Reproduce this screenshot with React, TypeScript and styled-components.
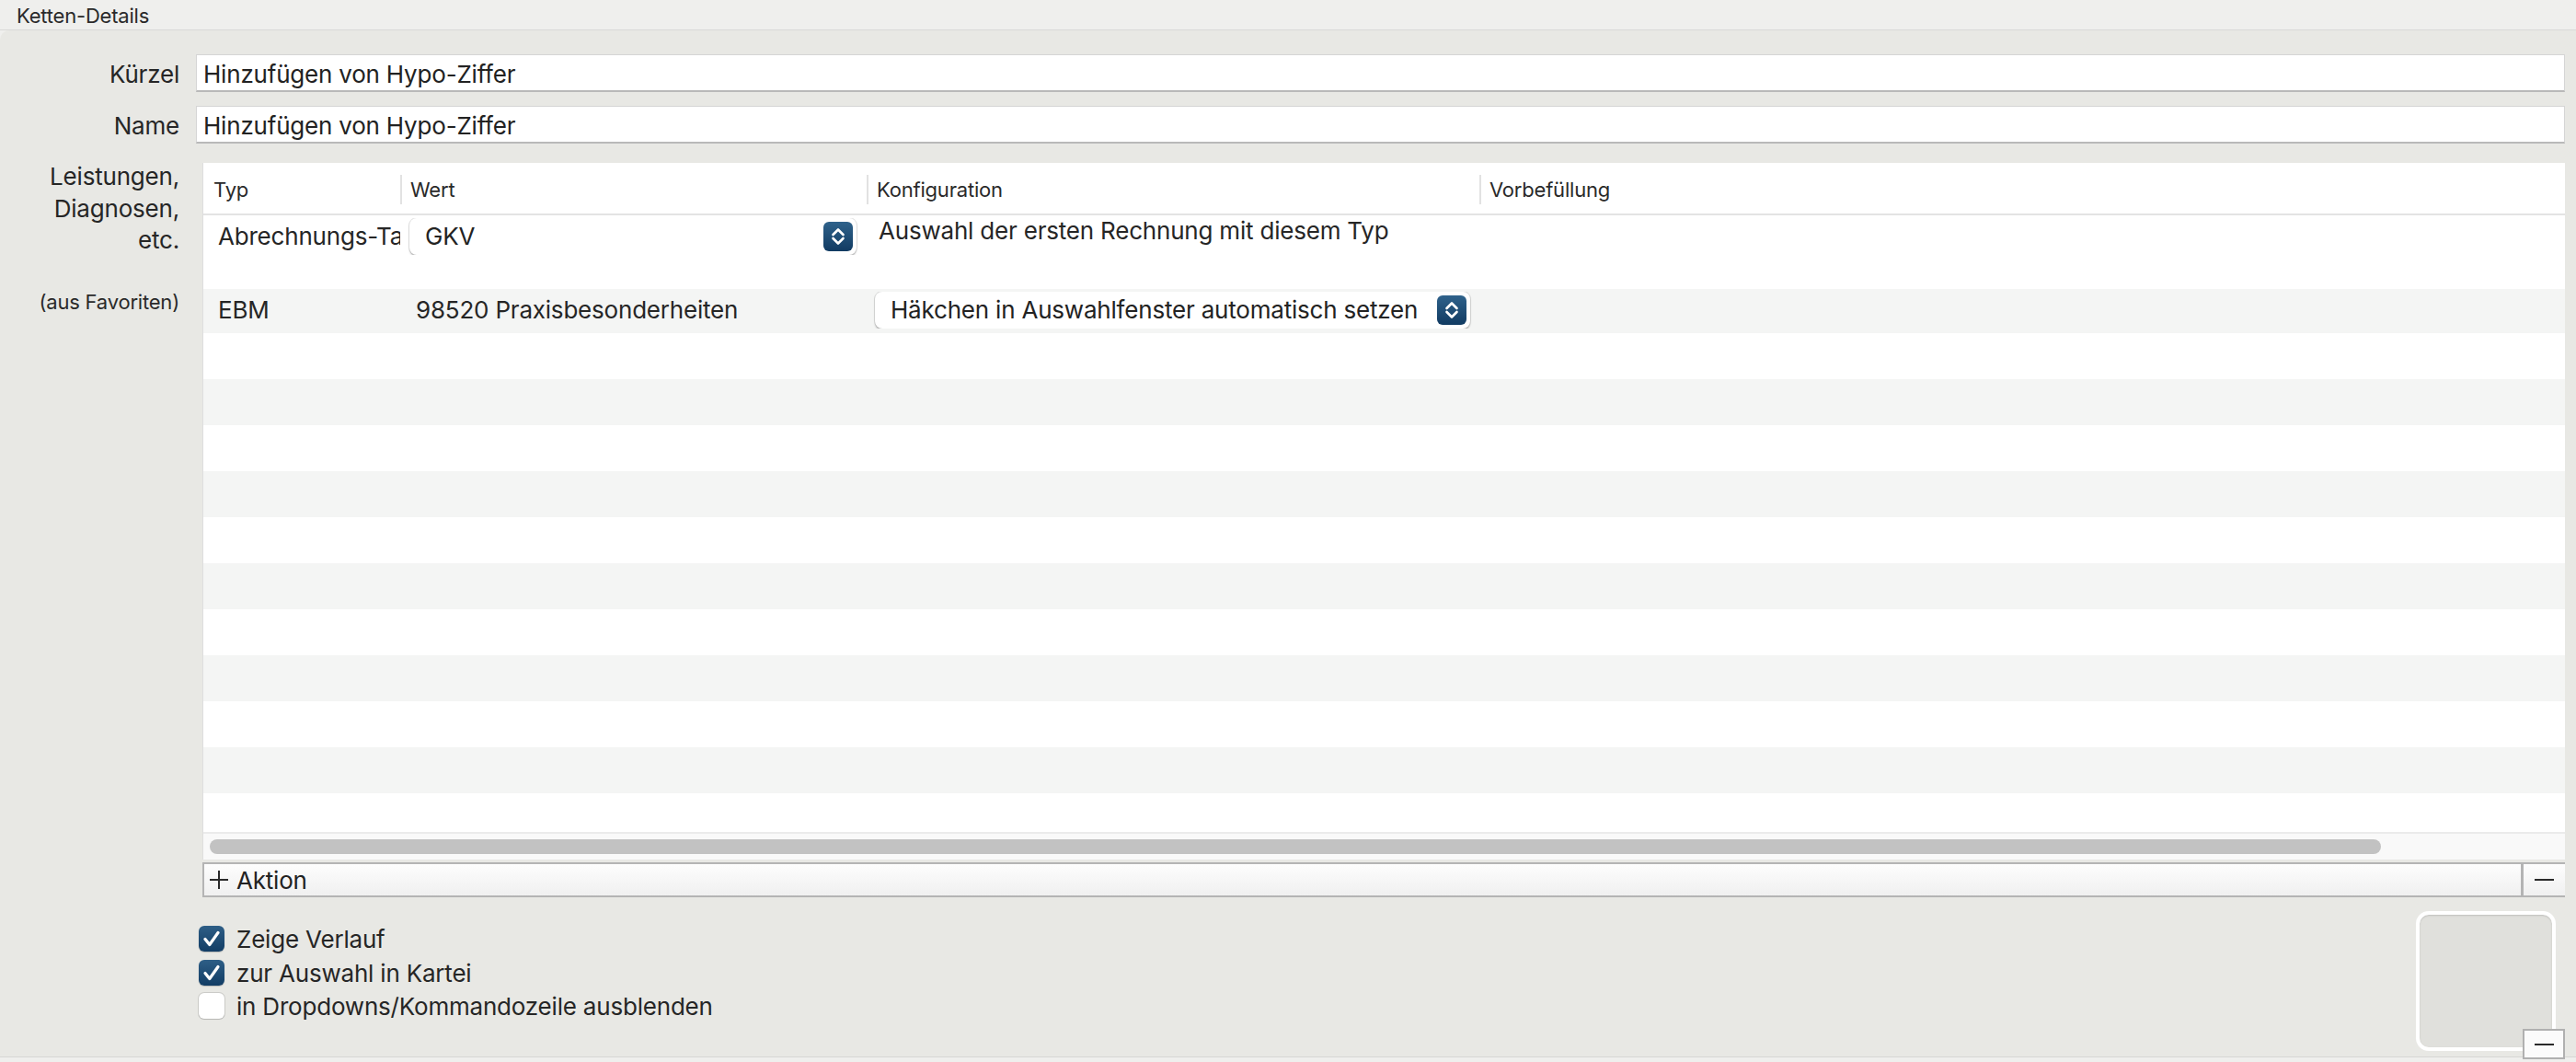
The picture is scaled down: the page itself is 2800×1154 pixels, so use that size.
import React from "react";
import styled, { createGlobalStyle } from "styled-components";

const GlobalStyle = createGlobalStyle`
  html, body {
    margin: 0;
    padding: 0;
    background: #efefed;
  }
  body {
    font-family: Inter, "Noto Sans", "Liberation Sans", sans-serif;
    color: #262626;
    letter-spacing: -0.2px;
    -webkit-font-smoothing: antialiased;
  }
`;

const COLS = "214px 507px 666px 1fr";

const Window = styled.div`
  width: 2800px;
  height: 1154px;
  display: flex;
  flex-direction: column;
  background: #efefed;
  overflow: hidden;
`;

const TitleBar = styled.div`
  height: 33px;
  box-sizing: border-box;
  padding: 3px 0 0 18px;
  font-size: 22px;
  line-height: 29px;
  color: #2a2a2a;
  border-bottom: 1px solid #d9d9d7;
`;

const Panel = styled.div`
  height: 1116px;
  box-sizing: border-box;
  background: #e8e8e4;
  border-top-left-radius: 10px;
  border-bottom: 1px solid #d6d6d4;
  padding: 26px 12px 0 0;
  display: flex;
  flex-direction: column;
`;

const FieldRow = styled.div<{ $top?: number }>`
  display: grid;
  grid-template-columns: 195px 1fr;
  column-gap: 18px;
  margin-top: ${(p) => p.$top ?? 0}px;
`;

const Label = styled.div`
  height: 41px;
  box-sizing: border-box;
  text-align: right;
  font-size: 26px;
  line-height: 38px;
  padding-top: 3px;
  color: #262626;
`;

const TextField = styled.div`
  height: 41px;
  box-sizing: border-box;
  background: #fff;
  border: 1px solid #d5d5d5;
  border-bottom: 2px solid #b9b9b9;
  padding: 3px 0 0 7px;
  font-size: 26px;
  line-height: 35px;
  color: #222;
`;

const LabelStack = styled.div`
  display: flex;
  flex-direction: column;
  align-items: flex-end;
  margin-top: -2px;
`;

const StackLine = styled.div`
  font-size: 26px;
  line-height: 34.5px;
  color: #262626;
`;

const Hint = styled.div`
  font-size: 22px;
  line-height: 28px;
  margin-top: 35px;
  color: #2a2a2a;
`;

const TableArea = styled.div`
  margin-left: 7px;
  display: flex;
  flex-direction: column;
`;

const TableBox = styled.div`
  background: #fff;
  border-left: 1px solid #dedede;
`;

const HeaderRow = styled.div`
  display: grid;
  grid-template-columns: ${COLS};
  height: 57px;
  box-sizing: border-box;
  border-bottom: 2px solid #e3e3e3;
`;

const HeaderCell = styled.div<{ $sep?: boolean }>`
  position: relative;
  padding: 4px 0 0 11px;
  font-size: 22px;
  line-height: 51px;
  color: #2a2a2a;
  white-space: nowrap;
  overflow: hidden;
  &::before {
    content: "";
    display: ${(p) => (p.$sep ? "block" : "none")};
    position: absolute;
    left: 0;
    top: 13px;
    height: 32px;
    width: 2px;
    background: #e2e2e2;
  }
`;

const Body = styled.div`
  height: 670px;
  overflow: hidden;
`;

const Row = styled.div<{ $h: number; $alt?: boolean; $top?: boolean }>`
  display: grid;
  grid-template-columns: ${COLS};
  height: ${(p) => p.$h}px;
  box-sizing: border-box;
  background: ${(p) => (p.$alt ? "#f4f5f4" : "#fff")};
  align-items: ${(p) => (p.$top ? "start" : "center")};
  padding: ${(p) => (p.$top ? "3px 0 0" : "0 0 3px")};
`;

const Cell = styled.div<{ $pad: number; $lift?: number }>`
  padding-left: ${(p) => p.$pad}px;
  font-size: 26px;
  line-height: 40px;
  height: 40px;
  margin-top: ${(p) => -(p.$lift ?? 0)}px;
  white-space: nowrap;
  overflow: hidden;
  color: #262626;
`;

const PopupBox = styled.div<{ $w: number }>`
  width: ${(p) => p.$w}px;
  height: 40px;
  box-sizing: border-box;
  background: #fff;
  border-radius: 8px;
  box-shadow: 0 0 0 1px rgba(0, 0, 0, 0.09), 0 1.5px 2px rgba(0, 0, 0, 0.22);
  display: flex;
  align-items: center;
  justify-content: space-between;
  padding: 0 4px 0 17px;
  font-size: 26px;
  color: #232323;
`;

const Stepper = styled.div`
  width: 32px;
  height: 32px;
  border-radius: 6px;
  background: linear-gradient(#2f628b, #113b62);
  display: flex;
  align-items: center;
  justify-content: center;
`;

const ScrollTrack = styled.div`
  height: 30px;
  box-sizing: border-box;
  background: #f9f9f9;
  border-top: 2px solid #ebebeb;
  padding: 6px 200px 0 7px;
`;

const Thumb = styled.div`
  height: 16px;
  border-radius: 8px;
  background: #c2c2c2;
`;

const ActionBar = styled.div`
  margin-top: 3px;
  height: 38px;
  box-sizing: border-box;
  display: flex;
  border-top: 2px solid #b4b4b4;
  border-bottom: 2px solid #b4b4b4;
  border-left: 2px solid #b4b4b4;
  background: linear-gradient(#fdfdfd, #f0f0f0);
`;

const AddButton = styled.div`
  flex: 1;
  display: flex;
  align-items: center;
  gap: 8px;
  padding-left: 5px;
  font-size: 26px;
  color: #222;
`;

const MinusCell = styled.div`
  width: 45px;
  border-left: 3px solid #b4b4b4;
  display: flex;
  align-items: center;
  justify-content: center;
`;

const MinusLine = styled.div`
  width: 21px;
  height: 2px;
  background: #2a2a2a;
`;

const Footer = styled.div`
  display: flex;
  justify-content: space-between;
  align-items: flex-start;
  padding-left: 216px;
`;

const Checks = styled.div`
  padding-top: 31px;
  display: flex;
  flex-direction: column;
`;

const CheckRow = styled.div`
  height: 36.5px;
  display: flex;
  align-items: flex-start;
  gap: 13px;
  font-size: 26px;
  line-height: 30px;
  color: #262626;
`;

const Box = styled.div<{ $on: boolean }>`
  width: 28px;
  height: 28px;
  box-sizing: border-box;
  border-radius: 6px;
  background: ${(p) => (p.$on ? "linear-gradient(#2e5e86, #123d65)" : "#fff")};
  box-shadow: ${(p) =>
    p.$on ? "0 1px 1px rgba(0,0,0,0.2)" : "0 0 0 1px rgba(0,0,0,0.12), 0 1px 1px rgba(0,0,0,0.1)"};
  display: flex;
  align-items: center;
  justify-content: center;
`;

const Well = styled.div`
  position: relative;
  margin: 15px 10px 0 0;
  width: 152px;
  height: 152px;
  box-sizing: border-box;
  border-radius: 14px;
  border: 4px solid #fff;
  background: #e0e0dc;
  box-shadow: inset 0 1px 2px rgba(0, 0, 0, 0.15);
`;

const WellMinus = styled.div`
  position: absolute;
  right: -14px;
  bottom: -13px;
  width: 46px;
  height: 33px;
  box-sizing: border-box;
  background: #fbfbfb;
  border: 2px solid #b0b0b0;
  display: flex;
  align-items: center;
  justify-content: center;
`;

function Chevrons() {
  return (
    <svg width="32" height="32" viewBox="0 0 32 32" fill="none">
      <path d="M10.5 14 L16 8.5 L21.5 14" stroke="#fff" strokeWidth="2.6" strokeLinecap="round" strokeLinejoin="round" />
      <path d="M10.5 18 L16 23.5 L21.5 18" stroke="#fff" strokeWidth="2.6" strokeLinecap="round" strokeLinejoin="round" />
    </svg>
  );
}

function Popup({ width, label }: { width: number; label: string }) {
  return (
    <PopupBox $w={width}>
      <span>{label}</span>
      <Stepper>
        <Chevrons />
      </Stepper>
    </PopupBox>
  );
}

function Check({ on, label }: { on: boolean; label: string }) {
  return (
    <CheckRow>
      <Box $on={on}>
        {on && (
          <svg width="28" height="28" viewBox="0 0 28 28" fill="none">
            <path d="M7 14.5 L11.8 20.5 L21 7.5" stroke="#fff" strokeWidth="3.2" strokeLinecap="round" strokeLinejoin="round" />
          </svg>
        )}
      </Box>
      <span>{label}</span>
    </CheckRow>
  );
}

export default function App() {
  const fillers = Array.from({ length: 11 }, (_, i) => i % 2 === 1);
  return (
    <>
      <GlobalStyle />
      <Window>
        <TitleBar>Ketten-Details</TitleBar>
        <Panel>
          <FieldRow>
            <Label>Kürzel</Label>
            <TextField>Hinzufügen von Hypo-Ziffer</TextField>
          </FieldRow>
          <FieldRow $top={15}>
            <Label>Name</Label>
            <TextField>Hinzufügen von Hypo-Ziffer</TextField>
          </FieldRow>
          <FieldRow $top={21}>
            <LabelStack>
              <StackLine>Leistungen,</StackLine>
              <StackLine>Diagnosen,</StackLine>
              <StackLine>etc.</StackLine>
              <Hint>(aus Favoriten)</Hint>
            </LabelStack>
            <TableArea>
              <TableBox>
                <HeaderRow>
                  <HeaderCell>Typ</HeaderCell>
                  <HeaderCell $sep>Wert</HeaderCell>
                  <HeaderCell $sep>Konfiguration</HeaderCell>
                  <HeaderCell $sep>Vorbefüllung</HeaderCell>
                </HeaderRow>
                <Body>
                  <Row $h={80} $top>
                    <Cell $pad={16}>Abrechnungs-Tag</Cell>
                    <Cell $pad={10}>
                      <Popup width={486} label="GKV" />
                    </Cell>
                    <Cell $pad={13} $lift={6}>
                      Auswahl der ersten Rechnung mit diesem Typ
                    </Cell>
                    <Cell $pad={0} />
                  </Row>
                  <Row $h={48} $alt>
                    <Cell $pad={16}>EBM</Cell>
                    <Cell $pad={17}>98520 Praxisbesonderheiten</Cell>
                    <Cell $pad={9}>
                      <Popup width={647} label="Häkchen in Auswahlfenster automatisch setzen" />
                    </Cell>
                    <Cell $pad={0} />
                  </Row>
                  {fillers.map((alt, i) => (
                    <Row key={i} $h={50} $alt={alt} />
                  ))}
                </Body>
                <ScrollTrack>
                  <Thumb />
                </ScrollTrack>
              </TableBox>
              <ActionBar>
                <AddButton>
                  <svg width="22" height="22" viewBox="0 0 22 22">
                    <path d="M11 1 V21 M1 11 H21" stroke="#2a2a2a" strokeWidth="2" />
                  </svg>
                  <span>Aktion</span>
                </AddButton>
                <MinusCell>
                  <MinusLine />
                </MinusCell>
              </ActionBar>
            </TableArea>
          </FieldRow>
          <Footer>
            <Checks>
              <Check on label="Zeige Verlauf" />
              <Check on label="zur Auswahl in Kartei" />
              <Check on={false} label="in Dropdowns/Kommandozeile ausblenden" />
            </Checks>
            <Well>
              <WellMinus>
                <MinusLine />
              </WellMinus>
            </Well>
          </Footer>
        </Panel>
      </Window>
    </>
  );
}
